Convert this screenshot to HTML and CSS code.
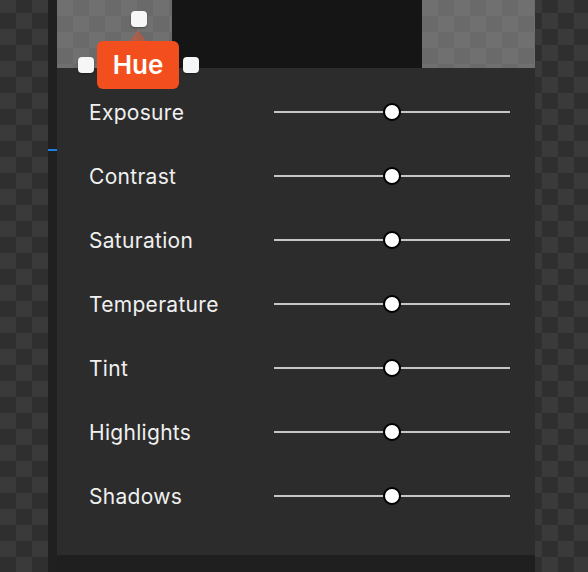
FILE: index.html
```html
<!DOCTYPE html>
<html lang="en">
<head>
    <meta charset="UTF-8">
    <meta name="viewport" content="width=device-width, initial-scale=1.0">
    <title>Adjustments</title>
    <link rel="stylesheet" href="styles.css">
</head>
<body>
    <div class="canvas">
        <div class="checker side-left"></div>
        <div class="gutter">
            <div class="guide"></div>
        </div>
        <div class="column">
            <div class="preview">
                <div class="checker-light preview-left"></div>
                <div class="preview-mid"></div>
                <div class="checker-light preview-right"></div>

                <div class="handle handle-top"></div>
                <div class="handle handle-left"></div>
                <div class="handle handle-right"></div>
                <div class="tag">
                    <span class="tag-arrow"></span>
                    Hue
                </div>
            </div>

            <div class="panel">
                <div class="row">
                    <span class="label">Exposure</span>
                    <div class="track"><span class="thumb"></span></div>
                </div>
                <div class="row">
                    <span class="label">Contrast</span>
                    <div class="track"><span class="thumb"></span></div>
                </div>
                <div class="row">
                    <span class="label">Saturation</span>
                    <div class="track"><span class="thumb"></span></div>
                </div>
                <div class="row">
                    <span class="label">Temperature</span>
                    <div class="track"><span class="thumb"></span></div>
                </div>
                <div class="row">
                    <span class="label">Tint</span>
                    <div class="track"><span class="thumb"></span></div>
                </div>
                <div class="row">
                    <span class="label">Highlights</span>
                    <div class="track"><span class="thumb"></span></div>
                </div>
                <div class="row">
                    <span class="label">Shadows</span>
                    <div class="track"><span class="thumb"></span></div>
                </div>
            </div>
            <div class="below"></div>
        </div>
        <div class="checker side-right"></div>
    </div>
</body>
</html>
```

FILE: styles.css
```css
* {
    box-sizing: border-box;
}

body {
    margin: 0;
    padding: 0;
    background-color: #1f1f1f;
    font-family: Inter, "Noto Sans", sans-serif;
}

.canvas {
    display: flex;
    width: 588px;
    height: 572px;
    overflow: hidden;
}

.checker {
    background-color: #3a3a3a;
    background-image: conic-gradient(#2f2f2f 25%, #3a3a3a 0 50%, #2f2f2f 0 75%, #3a3a3a 0);
    background-size: 32px 32px;
}

.checker-light {
    background-color: #707070;
    background-image: conic-gradient(#6a6a6a 25%, #707070 0 50%, #6a6a6a 0 75%, #707070 0);
    background-size: 32px 32px;
}

.side-left {
    width: 48px;
    background-position: 0 -3px;
}

.side-right {
    width: 53px;
    background-position: -9px -3px;
}

.gutter {
    position: relative;
    width: 9px;
    background-color: #202020;
}

.guide {
    position: absolute;
    left: 0;
    top: 149px;
    width: 9px;
    height: 2px;
    background-color: #1a7fe0;
}

.column {
    display: flex;
    flex-direction: column;
    width: 478px;
}

.preview {
    position: relative;
    display: flex;
    height: 68px;
}

.preview-left {
    width: 115px;
}

.preview-mid {
    width: 250px;
    background-color: #151515;
}

.preview-right {
    width: 113px;
}

.handle {
    position: absolute;
    width: 16px;
    height: 16px;
    border-radius: 4px;
    background-color: #f6f6f6;
    box-shadow: 0 1px 2px rgba(0, 0, 0, 0.35);
    z-index: 2;
}

.handle-top {
    left: 74px;
    top: 11px;
}

.handle-left {
    left: 21px;
    top: 57px;
}

.handle-right {
    left: 126px;
    top: 57px;
}

.tag {
    position: absolute;
    left: 40px;
    top: 41px;
    width: 82px;
    height: 48px;
    border-radius: 6px;
    background-color: #f24e1e;
    color: #fff;
    font-size: 26px;
    font-weight: 600;
    line-height: 48px;
    text-align: center;
    z-index: 1;
}

.tag-arrow {
    position: absolute;
    left: 33px;
    top: -11px;
    width: 0;
    height: 0;
    border-left: 8px solid transparent;
    border-right: 8px solid transparent;
    border-bottom: 11px solid rgba(242, 78, 30, 0.45);
}

.panel {
    height: 487px;
    padding: 12px 25px 0 32px;
    background-color: #2c2c2c;
}

.row {
    display: grid;
    grid-template-columns: 185px 236px;
    align-items: center;
    height: 64px;
}

.label {
    color: #f0f0f0;
    font-size: 21px;
    letter-spacing: 0.3px;
}

.track {
    position: relative;
    height: 2px;
    background-color: #c6c6c6;
}

.thumb {
    position: absolute;
    left: 50%;
    top: 50%;
    width: 18px;
    height: 18px;
    margin: -9px 0 0 -9px;
    border: 2px solid #000;
    border-radius: 50%;
    background-color: #fff;
}

.below {
    flex: 1;
    background-color: #1f1f1f;
}
```
